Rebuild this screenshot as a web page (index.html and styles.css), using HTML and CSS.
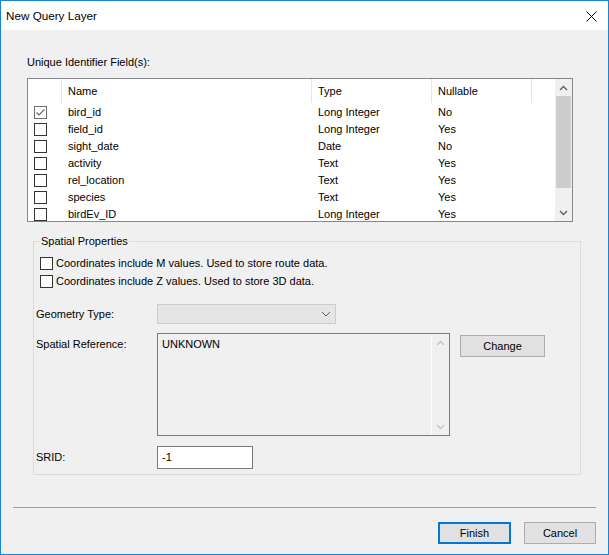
FILE: index.html
```html
<!DOCTYPE html>
<html>
<head>
<meta charset="utf-8">
<title>New Query Layer</title>
<link rel="stylesheet" href="styles.css">
</head>
<body>
<div class="window">
  <div class="titlebar">
    <span class="title">New Query Layer</span>
    <svg class="close" width="11" height="11" viewBox="0 0 11 11"><path d="M0.5 0.5 L10.5 10.5 M10.5 0.5 L0.5 10.5" stroke="#000" stroke-width="1" fill="none"/></svg>
  </div>
  <div class="content">
    <div class="caption">Unique Identifier Field(s):</div>
    <div class="listview">
      <div class="lv-main">
        <div class="lv-row lv-header">
          <div class="cell c-check"></div>
          <div class="cell c-name">Name</div>
          <div class="cell c-type">Type</div>
          <div class="cell c-null">Nullable</div>
          <div class="cell c-rest"></div>
        </div>
        <div class="lv-row">
          <div class="cell c-check"><span class="cbox checked"><svg width="11" height="11" viewBox="0 0 11 11"><path d="M1.5 5.5 L4 8 L9.5 2.5" stroke="#666" stroke-width="1.2" fill="none"/></svg></span></div>
          <div class="cell c-name">bird_id</div><div class="cell c-type">Long Integer</div><div class="cell c-null">No</div><div class="cell c-rest"></div>
        </div>
        <div class="lv-row">
          <div class="cell c-check"><span class="cbox"></span></div>
          <div class="cell c-name">field_id</div><div class="cell c-type">Long Integer</div><div class="cell c-null">Yes</div><div class="cell c-rest"></div>
        </div>
        <div class="lv-row">
          <div class="cell c-check"><span class="cbox"></span></div>
          <div class="cell c-name">sight_date</div><div class="cell c-type">Date</div><div class="cell c-null">No</div><div class="cell c-rest"></div>
        </div>
        <div class="lv-row">
          <div class="cell c-check"><span class="cbox"></span></div>
          <div class="cell c-name">activity</div><div class="cell c-type">Text</div><div class="cell c-null">Yes</div><div class="cell c-rest"></div>
        </div>
        <div class="lv-row">
          <div class="cell c-check"><span class="cbox"></span></div>
          <div class="cell c-name">rel_location</div><div class="cell c-type">Text</div><div class="cell c-null">Yes</div><div class="cell c-rest"></div>
        </div>
        <div class="lv-row">
          <div class="cell c-check"><span class="cbox"></span></div>
          <div class="cell c-name">species</div><div class="cell c-type">Text</div><div class="cell c-null">Yes</div><div class="cell c-rest"></div>
        </div>
        <div class="lv-row">
          <div class="cell c-check"><span class="cbox"></span></div>
          <div class="cell c-name">birdEv_ID</div><div class="cell c-type">Long Integer</div><div class="cell c-null">Yes</div><div class="cell c-rest"></div>
        </div>
      </div>
      <div class="vscroll">
        <div class="sb-btn"><svg width="9" height="6" viewBox="0 0 9 6"><path d="M1 5 L4.5 1.5 L8 5" stroke="#606060" stroke-width="1.4" fill="none"/></svg></div>
        <div class="sb-track"><div class="sb-thumb"></div></div>
        <div class="sb-btn"><svg width="9" height="6" viewBox="0 0 9 6"><path d="M1 1 L4.5 4.5 L8 1" stroke="#606060" stroke-width="1.4" fill="none"/></svg></div>
      </div>
    </div>

    <fieldset class="group">
      <legend>Spatial Properties</legend>
      <div class="chk-row"><span class="cbox"></span><span>Coordinates include M values. Used to store route data.</span></div>
      <div class="chk-row"><span class="cbox"></span><span>Coordinates include Z values. Used to store 3D data.</span></div>

      <div class="form-row row-geom">
        <span class="lbl">Geometry Type:</span>
        <div class="combo">
          <svg width="10" height="6" viewBox="0 0 10 6"><path d="M1 1 L5 5 L9 1" stroke="#606060" stroke-width="1" fill="none"/></svg>
        </div>
      </div>

      <div class="form-row row-sref">
        <span class="lbl lbl-top">Spatial Reference:</span>
        <div class="textbox">
          <div class="tb-text">UNKNOWN</div>
          <div class="tb-scroll">
            <div class="sb-btn"><svg width="9" height="6" viewBox="0 0 9 6"><path d="M1 5 L4.5 1.5 L8 5" stroke="#c4c4c4" stroke-width="1.3" fill="none"/></svg></div>
            <div class="sb-btn"><svg width="9" height="6" viewBox="0 0 9 6"><path d="M1 1 L4.5 4.5 L8 1" stroke="#c4c4c4" stroke-width="1.3" fill="none"/></svg></div>
          </div>
        </div>
        <button class="btn btn-change">Change</button>
      </div>

      <div class="form-row row-srid">
        <span class="lbl">SRID:</span>
        <div class="input">-1</div>
      </div>
    </fieldset>

    <div class="separator"></div>

    <div class="buttons">
      <button class="btn btn-default">Finish</button>
      <button class="btn btn-cancel">Cancel</button>
    </div>
  </div>
</div>
</body>
</html>
```

FILE: styles.css
```css
html, body {
  margin: 0;
  padding: 0;
  background: #f0f0f0;
}

.window {
  width: 609px;
  height: 555px;
  box-sizing: border-box;
  border: 1px solid #1883d7;
  background: #f0f0f0;
  display: flex;
  flex-direction: column;
  font-family: "Liberation Sans", Arial, sans-serif;
  font-size: 11px;
  color: #000;
  overflow: hidden;
}

.titlebar {
  height: 29px;
  flex: none;
  background: #fff;
  display: flex;
  align-items: center;
  justify-content: space-between;
  padding: 0 11px 0 5px;
}

.title {
  font-size: 11.7px;
  line-height: 14px;
  margin-top: 1px;
}

.close {
  display: block;
  margin-top: 2px;
}

.content {
  flex: 1;
  display: flex;
  flex-direction: column;
}

.caption {
  margin: 26px 0 0 26px;
  line-height: 13px;
}

/* list view */
.listview {
  margin: 9px 0 0 26px;
  width: 546px;
  height: 144px;
  box-sizing: border-box;
  border: 1px solid #828790;
  background: #fff;
  display: flex;
}

.lv-main {
  flex: 1;
  overflow: hidden;
}

.lv-row {
  display: grid;
  grid-template-columns: 34px 250px 120px 100px 1fr;
  height: 17px;
  align-items: center;
  line-height: 13px;
}

.lv-row .c-name,
.lv-row .c-type,
.lv-row .c-null {
  padding-top: 2px;
}

.lv-header {
  height: 24px;
  align-items: stretch;
}

.lv-header .cell {
  display: flex;
  align-items: center;
  border-right: 1px solid #e5e5e5;
  padding-top: 0;
}

.lv-header .c-rest {
  border-right: none;
}

.cell {
  padding-left: 6px;
  white-space: nowrap;
  overflow: hidden;
}

.c-check {
  padding-left: 6px;
  display: flex;
  align-items: center;
  padding-top: 1px;
}

.cbox {
  width: 13px;
  height: 13px;
  box-sizing: border-box;
  border: 1px solid #333;
  background: #fff;
  display: flex;
  align-items: center;
  justify-content: center;
  flex: none;
}

.cbox.checked {
  border-color: #6d6d6d;
}

.cbox svg {
  display: block;
}

/* scrollbar */
.vscroll {
  width: 17px;
  flex: none;
  background: #f0f0f0;
  display: flex;
  flex-direction: column;
}

.sb-btn {
  height: 17px;
  flex: none;
  display: flex;
  align-items: center;
  justify-content: center;
}

.sb-btn svg {
  display: block;
}

.sb-track {
  flex: 1;
  display: flex;
  flex-direction: column;
}

.sb-thumb {
  margin: 0 1px;
  height: 92px;
  background: #cdcdcd;
}

/* group box */
.group {
  margin: 13px 0 0 32px;
  width: 548px;
  box-sizing: border-box;
  border: 1px solid #dcdcdc;
  padding: 6px 0 5px 2px;
  min-width: 0;
}

.group legend {
  margin-left: 4px;
  padding: 0 1px;
  line-height: 13px;
}

.chk-row {
  display: flex;
  align-items: center;
  gap: 3px;
  height: 18px;
  margin-left: 4px;
  line-height: 13px;
}

.form-row {
  display: grid;
  grid-template-columns: 121px auto auto 1fr;
  align-items: center;
  line-height: 13px;
}

.row-geom {
  margin-top: 14px;
}

.row-sref {
  margin-top: 9px;
  align-items: start;
}

.row-srid {
  margin-top: 10px;
}

.lbl-top {
  padding-top: 5px;
}

.combo {
  width: 179px;
  height: 20px;
  box-sizing: border-box;
  border: 1px solid #cccccc;
  background: #e5e5e5;
  display: flex;
  align-items: center;
  justify-content: flex-end;
  padding-right: 4px;
}

.combo svg {
  display: block;
}

.textbox {
  width: 293px;
  height: 103px;
  box-sizing: border-box;
  border: 1px solid #7a7a7a;
  background: #f0f0f0;
  display: flex;
}

.tb-text {
  flex: 1;
  padding: 4px 0 0 4px;
}

.tb-scroll {
  width: 17px;
  border-left: 1px solid #fafafa;
  display: flex;
  flex-direction: column;
  justify-content: space-between;
}

.input {
  width: 96px;
  height: 23px;
  box-sizing: border-box;
  border: 1px solid #7a7a7a;
  background: #fff;
  padding: 4px 0 0 4px;
}

.btn {
  font-family: "Liberation Sans", Arial, sans-serif;
  font-size: 11px;
  color: #000;
  background: #e1e1e1;
  border: 1px solid #adadad;
  height: 22px;
  padding: 0;
  margin: 0;
  box-sizing: border-box;
}

.btn-change {
  width: 85px;
  margin: 2px 0 0 10px;
}

.separator {
  margin: 32px 0 0 12px;
  width: 583px;
  height: 1px;
  background: #a0a0a0;
}

.buttons {
  margin: 14px 12px 0 0;
  display: flex;
  justify-content: flex-end;
  gap: 13px;
}

.btn-default {
  width: 73px;
  border: 2px solid #0078d7;
}

.btn-cancel {
  width: 72px;
}
```
